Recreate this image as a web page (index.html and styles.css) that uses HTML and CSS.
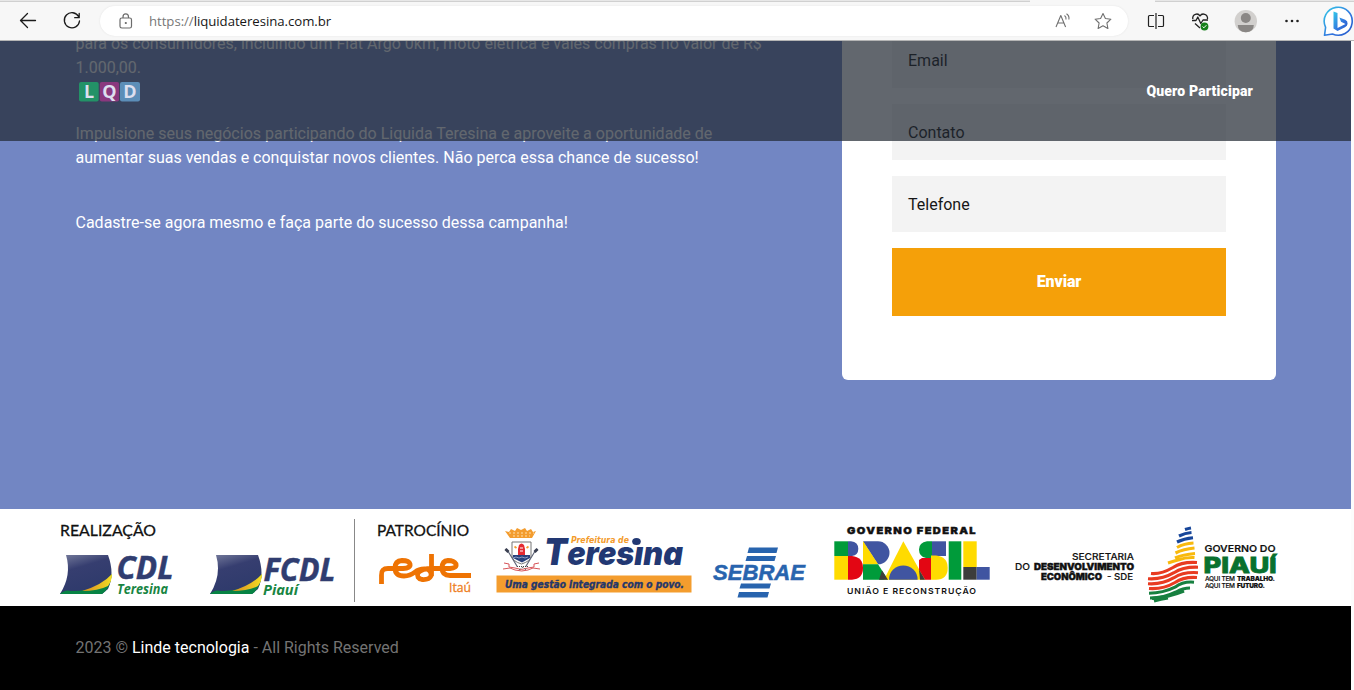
FILE: index.html
```html
<!DOCTYPE html>
<html lang="pt-BR">
<head>
<meta charset="utf-8">
<title>Liquida Teresina</title>
<link rel="stylesheet" href="styles.css">
</head>
<body>
<header class="browser">
  <div class="tab-edge"><i class="tabs-left"></i><i class="tabs-right"></i></div>
  <div class="toolbar">
    <svg class="nav-icons" width="100" height="34" fill="none" stroke="#1b1b1b" stroke-width="1.3" stroke-linecap="round" stroke-linejoin="round">
      <path d="M35.500 14.500H20.500M27.500 7.500l-7 7 7 7"/>
      <path d="M78.700 10.800A7.600 7.600 0 1 0 79.500 15M79.200 7.500v4.200h-4.500"/>
    </svg>
    <div class="address">
      <svg class="lock" width="14" height="17" fill="none" stroke="#6c6c6c" stroke-width="1.200"><rect x="1" y="5" width="11.500" height="10" rx="1.800"/><path d="M4 5V4a2.700 3 0 0 1 5.500 0v1"/><circle cx="6.800" cy="10" r=".5" fill="#555"/></svg>
      <span class="url"><span class="scheme">https://</span>liquidateresina.com.br</span>
      <svg class="address-icons" width="60" height="20" fill="none" stroke="#707070" stroke-width="1.100" stroke-linejoin="round">
        <path d="M1 16L5.800 4.500 10.600 16M2.800 12h6M9.500 4.500q2 1.300 1.500 4M11.500 2.800q3 1.900 2.400 5.700"/>
        <path d="M48 2.500l2.400 5 5.500.7-4 3.800 1 5.500-4.900-2.700-4.900 2.700 1-5.500-4-3.800 5.500-.7z"/>
      </svg>
    </div>
    <svg class="actions" width="226" height="36" fill="none" stroke="#222" stroke-width="1.300" stroke-linejoin="round">
      <path d="M26 9.500h-4.500q-1 0-1 1v9q0 1 1 1H26M30 9.500h4.500q1 0 1 1v9q0 1-1 1H30M28 7v16" stroke-width="1.200"/>
      <path d="M64.800 13c-.7-5 5.200-6.500 7.200-3 2-3.500 8-2 7.500 3M64 14.500h4l1.800-3.500 3 6.500 2.200-3.500h5M67 17.500l5 4.500"/>
      <circle cx="76.500" cy="20.500" r="3.900" fill="#16801b" stroke="none"/><path d="M74.600 20.600l1.300 1.200 2.500-2.600" stroke="#fff" stroke-width="1"/>
      <g stroke="none"><circle cx="117.800" cy="15.200" r="11.200" fill="#d2d0ce"/><circle cx="117.800" cy="12" r="5" fill="#8a8785"/><path d="M109.800 19h16q0 7.200-8 7.200t-8-7.200z" fill="#8a8785"/>
      <g fill="#222"><circle cx="158.500" cy="15" r="1.300"/><circle cx="164" cy="15" r="1.300"/><circle cx="169.500" cy="15" r="1.300"/></g></g>
      <defs><linearGradient id="bing" x2="1" y2="1"><stop stop-color="#34c9e8"/><stop offset=".6" stop-color="#3275df"/><stop offset="1" stop-color="#2458c8"/></linearGradient></defs>
      <path d="M196.500 29.300l1.100-8A14 14 0 1 1 204.500 28z" fill="#fff" stroke="url(#bing)" stroke-width="1.600"/>
      <path d="M205.500 5.500l4 1.500v15l8-4-4.500-2.200-1.600-4.400 5.800 2.300q2.600 1.200 2.400 4-.2 2-2.600 3.500l-7.500 3.800-4-2.600z" fill="url(#bing)" stroke="none"/>
    </svg>
  </div>
</header>
<main class="viewport">
  <nav class="site-nav">
    <svg class="brand" width="62" height="20">
      <rect width="19.700" height="19.500" rx="2" fill="#239267"/><rect x="20.800" width="19.300" height="19.500" rx="2" fill="#8a387e"/><rect x="41" width="20" height="19.500" rx="2" fill="#5c8eb8"/>
      <g fill="#dddfef" font-family="Open Sans" font-weight="700" font-size="18" text-anchor="middle"><text x="10" y="16">L</text><text x="30.500" y="16">Q</text><text x="51" y="16">D</text></g>
    </svg>
    <a class="join">Quero Participar</a>
  </nav>
  <section class="campaign">
    <div class="copy">
      <p>para os consumidores, incluindo um Fiat Argo 0km, moto elétrica e vales compras no valor de R$<br>1.000,00.</p>
      <p class="impulse">Impulsione seus negócios participando do Liquida Teresina e aproveite a oportunidade de<br>aumentar suas vendas e conquistar novos clientes. Não perca essa chance de sucesso!</p>
      <p class="signup">Cadastre-se agora mesmo e faça parte do sucesso dessa campanha!</p>
    </div>
    <form class="form-card">
      <div class="field">Email</div><div class="field">Contato</div><div class="field">Telefone</div>
      <button type="button" class="send">Enviar</button>
    </form>
  </section>
  <section class="sponsors">
    <svg width="1351" height="97" viewBox="0 509 1351 97">
      <defs>
        <linearGradient id="flag" x1="0" y1="0" x2=".4" y2="1"><stop stop-color="#777d9d"/><stop offset=".4" stop-color="#363e70"/><stop offset="1" stop-color="#2e3a6b"/></linearGradient>
        <linearGradient id="gold"><stop stop-color="#d98b20"/><stop offset="1" stop-color="#f3dd24"/></linearGradient>
        <g id="cdl-flag"><path d="M6 0H48Q55 19 48 34L42 39H0Q12 20 6 0z" fill="url(#flag)"/><path d="M0 39Q5 34 11 36Q37 37 52 19Q50 34 42 39z" fill="#078344"/><path d="M22 36Q42 30 52 19Q52 26 48 31Q38 36 22 36z" fill="url(#gold)"/></g>
      </defs>
      <g font-family="Lato" font-size="15.500" fill="#111" stroke="#111" stroke-width=".3"><text x="60" y="535.500" textLength="96" lengthAdjust="spacingAndGlyphs">REALIZAÇÃO</text><text x="377" y="536" textLength="92" lengthAdjust="spacingAndGlyphs">PATROCÍNIO</text></g>
      <path d="M354.500 519v83" stroke="#888"/>
      <use href="#cdl-flag" x="60" y="555"/><use href="#cdl-flag" x="210" y="555"/>
      <g font-family="Open Sans" font-weight="700" font-style="italic">
        <g fill="#303d70" stroke="#303d70" stroke-width=".5" font-size="32"><text x="116.500" y="579" textLength="57" lengthAdjust="spacingAndGlyphs">CDL</text><text x="263.500" y="581" textLength="72" lengthAdjust="spacingAndGlyphs">FCDL</text></g>
        <g fill="#188542" font-size="14"><text x="117" y="594" textLength="51" lengthAdjust="spacingAndGlyphs">Teresina</text><text x="263" y="595" textLength="35" lengthAdjust="spacingAndGlyphs">Piauí</text></g>
      </g>
      <path fill="none" stroke="#ee7303" stroke-width="4.800" d="M381.500 584V575Q381 568.500 388 568.500H403Q411 568 410 564Q409 560.500 402 560.500Q395 561 395 568Q395 576 404 576Q410 576 415 572Q420 568 427 569Q432 571 431 576Q429 580 422 579.500Q416 578 418 573Q421 568.500 433 568.500H450Q457 568 456 564Q454 560.500 448 560.500Q442 561 442 568Q442 575.500 450 575.500H471M431.500 554V576"/>
      <text x="449" y="592" font-family="Open Sans" font-size="12.500" fill="#ee7d21" stroke="#ee7d21" stroke-width=".3" textLength="22" lengthAdjust="spacingAndGlyphs">Itaú</text>
      <g fill="none">
        <path d="M510 538l-5-7 4 1 2-3 4 2 2-3 4 2 4-2 2 3 4-2 2 3 3-1-4 7z" fill="#f39c2e"/>
        <path d="M509 533h25M513 536h17" stroke="#ffe0ac" stroke-dasharray="2 2"/>
        <path d="M512 542h19v14q0 5-9.500 8-9.500-3-9.500-8z" fill="#fff" stroke="#777"/>
        <path d="M518 555V549l1-4q2.500-3 5 0l1 4v6z" fill="#e52b32"/><path d="M520 548h3M520 551h3" stroke="#fff"/><path d="M513 555h17v3l-8 4.500-9-4.500z" fill="#29417c"/><path d="M513 558l3-1 3 1 3-1 3 1 3-1" stroke="#b5c2e0" stroke-width=".7"/><path d="M514.500 546.500l2 1.500M528.500 546.500l-2 1.500" stroke="#f39c2e" stroke-width="1.700"/>
        <path d="M505.500 549l3 3 9 15M537.500 549l-3 3-9 15" stroke="#5c6275" stroke-width="1.200"/><path d="M505.500 549l3 3M537.500 549l-3 3" stroke="#3b4052" stroke-width="3"/>
        <path d="M504 563l5 1v3l6 1q6 3 13 0l6-1v-3l5-1M503 569l7-1 5 2q7 2 13 0l5-2 7 1" stroke="#d65459"/>
        <path d="M517 566.500h11M519 570l4-3 3 3" stroke="#444" stroke-dasharray="1 1"/>
      </g>
      <g font-family="Inter" font-style="italic" font-weight="900">
        <text x="544" y="565" font-size="36.500" fill="#223873" textLength="139" lengthAdjust="spacingAndGlyphs">T<tspan font-size="33">eresına</tspan></text><ellipse cx="636.500" cy="541.500" rx="4.300" ry="3.500" fill="#223873"/>
        <text x="571" y="543" font-family="DejaVu Sans" font-size="8" font-weight="700" fill="#f39b2c" textLength="58" lengthAdjust="spacingAndGlyphs">Prefeitura de</text>
        <path d="M496.500 575.500h195v17h-195z" fill="#f49d2e"/>
        <text x="505" y="587.500" font-family="DejaVu Sans" font-size="10" fill="#24376b" stroke="#24376b" stroke-width=".35" textLength="179" lengthAdjust="spacingAndGlyphs">Uma gestão integrada com o povo.</text>
      </g>
      <g fill="#2864ae"><path d="M749 547.500h29l-1.500 5.500h-29zM747 556h29l-1.500 5h-29zM741 583.500h30l-1.500 5h-30zM739 592h30l-1.500 5.500h-30z"/>
      <text x="713" y="580" font-family="Liberation Sans" font-style="italic" font-weight="700" font-size="22" stroke="#2864ae" stroke-width=".5" textLength="92" lengthAdjust="spacingAndGlyphs">SEBRAE</text></g>
      <g font-family="Inter" fill="#111"><text x="847" y="534" font-size="9.500" font-weight="900" stroke="#111" stroke-width=".4" textLength="130" lengthAdjust="spacingAndGlyphs" letter-spacing="1.200">GOVERNO FEDERAL</text><text x="847" y="593.500" font-size="8" font-weight="600" textLength="130" lengthAdjust="spacingAndGlyphs" letter-spacing=".9">UNIÃO E RECONSTRUÇÃO</text></g>
      <g>
        <path d="M834.300 541.300H848V556h-13.700z" fill="#009b3a"/><path d="M834.300 556H848v23.700h-13.700z" fill="#ffdb00"/>
        <path d="M848 541.300h3q7.300 1 7.300 7.400T852 556h-4z" fill="#4055a1"/><path d="M848 556h4q11 1 11 12t-11 11.700h-4z" fill="#e30613"/>
        <path d="M863 541.300v23h15z" fill="#ffdb00"/><path d="M863 541.300h15a11.500 11.500 0 0 1 0 23z" fill="#4055a1"/><path d="M863 541.300v23h15z" fill="#ffdb00"/><path d="M863 564.300h15l10 15.400h-25z" fill="#009b3a"/>
        <path d="M903.300 541.300L925 579.700h-41z" fill="#ffdb00"/><path d="M882 570.500l6 9.200h-9z" fill="#3d3d3c"/>
        <path d="M889 579.700a14.300 14.300 0 0 1 28.600 0z" fill="#4055a1"/>
        <path d="M932 541.300V556l-1 2h-5q-7-1.500-7-8.500t8-8.200z" fill="#009b3a"/><path d="M932 541.300h14V556h-14z" fill="#4055a1"/><path d="M919 560l3-2h9v21.700h-6l-6-10z" fill="#e30613"/><path d="M919 569.500l6 10.200h-5z" fill="#3d3d3c"/><path d="M931 555.500h5q11.700 1 11.700 12.500T936 579.700h-5z" fill="#ffdb00"/>
        <path d="M948.700 541.300h12.600v38.400h-12.600z" fill="#009b3a"/><path d="M963.300 541.300h13.400V567h-13.400z" fill="#ffdb00"/><path d="M963.300 567h13.400v12.700h-13.400z" fill="#3d3d3c"/><path d="M976.700 567h13v12.700h-13z" fill="#4055a1"/>
      </g>
      <g font-family="Inter" font-size="9" font-weight="500" fill="#111" stroke="#111" stroke-width=".15">
        <text x="1072" y="559.500" textLength="62" lengthAdjust="spacingAndGlyphs">SECRETARIA</text><text x="1015" y="570" textLength="15" lengthAdjust="spacingAndGlyphs">DO</text><text x="1034" y="570" font-weight="900" stroke-width=".4" textLength="100" lengthAdjust="spacingAndGlyphs">DESENVOLVIMENTO</text><text x="1041" y="580" font-weight="900" stroke-width=".4" textLength="61" lengthAdjust="spacingAndGlyphs">ECONÔMICO</text><text x="1107" y="580" textLength="26" lengthAdjust="spacingAndGlyphs">- SDE</text>
        <text x="1204.500" y="551.500" font-size="9.500" font-weight="600" textLength="71" lengthAdjust="spacingAndGlyphs">GOVERNO DO</text>
        <text x="1203.500" y="573" font-size="21.500" font-weight="800" fill="#08712f" stroke="#08712f" stroke-width=".8" textLength="73" lengthAdjust="spacingAndGlyphs">PIAU<tspan font-size="20">Í</tspan></text>
        <g font-size="6.500"><text x="1205" y="581" textLength="30">AQUI TEM</text><text x="1237" y="581" font-weight="900" textLength="38">TRABALHO.</text><text x="1205" y="588" textLength="30">AQUI TEM</text><text x="1237" y="588" font-weight="900" textLength="28">FUTURO.</text></g>
      </g>
      <g fill="none" stroke-width="3.100">
        <path stroke="#17469a" d="M1185 529.500q3-1 6-1.500M1179 536q6-3 12.500-3.500M1177 542q7-3.500 16-4.300"/>
        <path stroke="#f8b90d" d="M1177 547.500q7-4 16.500-4.500M1175.500 553q8-4 19-5M1175 558q8-3.500 20-4.500M1168 563q6-2 10-3 8-3 16.500-2.500"/>
        <path stroke="#e83b21" d="M1151 573.500q10 1 22-6 9-6 24-5M1148 578.700q14 1 26-6 9-6 24-5.500M1148 583.700q14 1 26-6 9-6 24-5M1149 588.500q14 1 26-6 9-6 22-5"/>
        <path stroke="#178040" d="M1149 593.200q14 0 26-6 8-6 19-5M1150 598q14 0 26-6 7-4 14-4M1152 599.500" /><path stroke="#178040" d="M1152 598.500q16-1 32-7.500M1154 601q7-2 14-3"/>
      </g>
    </svg>
  </section>
  <footer class="footer">2023 © <a>Linde tecnologia</a> - All Rights Reserved</footer>
</main>
</body>
</html>
```
FILE: styles.css
```css
* { box-sizing: border-box; }
body { margin: 0; width: 1354px; height: 690px; overflow: hidden; background: #fcfcfc; font: 16px/24px Roboto, sans-serif; }
.browser { height: 41px; background: #f7f7f7; border-bottom: 1px solid #b5b5b5; }
.tab-edge { height: 2px; display: flex; justify-content: space-between; }
.tabs-left { width: 1030px; background: #e7e7e7; border-bottom: 1px solid #d0d0d0; }
.tabs-right { width: 199px; background: #e7e7e7; border-bottom: 1px solid #d0d0d0; }
.toolbar { height: 38px; display: flex; align-items: flex-start; padding-top: 4px; }
.nav-icons { flex: none; }
.address { width: 1028px; height: 30px; border-radius: 15px; background: #fff; display: flex; align-items: center; padding: 0 13px 0 19px; box-shadow: 0 0 2px #e2e2e2; }
.url { margin-left: 16px; font: 13.2px/18px "Open Sans", sans-serif; letter-spacing: -.04px; color: #171717; }
.scheme { color: #777; }
.address-icons { margin-left: auto; }
.actions { flex: none; }
.viewport { position: relative; width: 1351px; height: 649px; overflow: hidden; }
.site-nav { position: absolute; inset: 0 0 auto; z-index: 1; height: 100px; padding: 0 98px 0 79px; display: flex; align-items: center; justify-content: space-between; background: rgba(31, 38, 49, .7); }
.brand { margin-top: 2px; overflow: visible; }
.join { color: #fff; font-size: 14px; font-weight: 900; letter-spacing: .15px; }
.campaign { height: 468px; padding: 0 75px; display: flex; justify-content: space-between; align-items: flex-start; background: #7286c3; color: #fff; }
.copy { width: 730px; white-space: nowrap; }
.copy p { margin: -9px 0 0 .5px; }
.copy .impulse { margin-top: 42px; }
.copy .signup { margin-top: 41px; }
.form-card { width: 434px; height: 339px; padding: 0 50px; border-radius: 0 0 6px 6px; background: #fff; color: #171717; overflow: hidden; }
.field { height: 56px; padding: 17px 16px 15px; margin-bottom: 16px; background: #f3f3f3; }
.field:first-child { margin-top: -9px; }
.send { width: 100%; height: 68px; border: 0; background: #f5a009; color: #fff; font: 900 16px/24px Roboto, sans-serif; letter-spacing: -.1px; }
.sponsors { height: 97px; background: #fff; }
.sponsors svg { display: block; }
.footer { height: 84px; padding: 30px 75.500px; background: #000; color: #737373; }
.footer a { color: #fff; }
```
